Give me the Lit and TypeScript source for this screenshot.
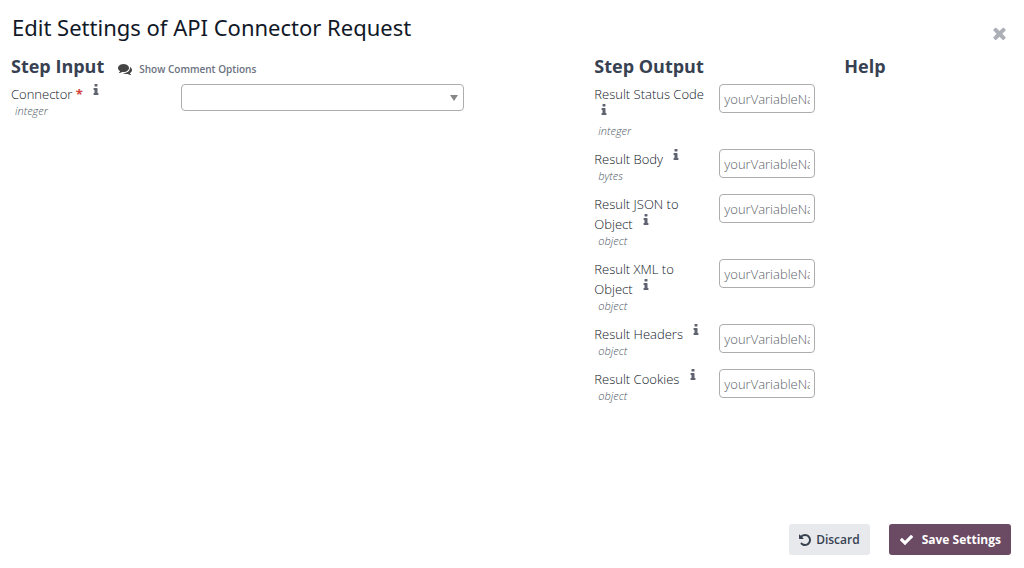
import { LitElement, html, css, svg } from "lit";
import { customElement, property } from "lit/decorators.js";

const ICONS = {
  info: {
    box: "576 128 640 1408",
    path: "M1216 1344v128q0 26-19 45t-45 19h-512q-26 0-45-19t-19-45v-128q0-26 19-45t45-19h64v-384h-64q-26 0-45-19t-19-45v-128q0-26 19-45t45-19h384q26 0 45 19t19 45v576h64q26 0 45 19t19 45zm-128-1152v192q0 26-19 45t-45 19h-256q-26 0-45-19t-19-45v-192q0-26 19-45t45-19h256q26 0 45 19t19 45z",
  },
  comments: {
    box: "0 0 1792 1792",
    path: "M1408 768q0 139-94 257t-256.5 186.5-353.5 68.5q-86 0-176-16-124 88-278 128-36 9-86 16h-3q-11 0-20.5-8t-11.5-21q-1-3-1-6.5t.5-6.5 2-6l2.5-5t3.5-5.5 4-5 4.5-5 4-4.5q5-6 23-25t26-29.5 22.5-29 25-38.5 20.5-44q-124-72-195-177t-71-224q0-139 94-257t256.5-186.5 353.5-68.5 353.5 68.5 256.5 186.5 94 257zm384 256q0 120-71 224.5t-195 176.5q10 24 20.5 44t25 38.5 22.5 29 26 29.5 23 25q1 1 4 4.5t4.5 5 4 5 3.5 5.5l2.5 5t2 6 .5 6.5-1 6.5q-3 14-13 22t-22 7q-50-7-86-16-154-40-278-128-90 16-176 16-271 0-472-132 58 4 88 4 161 0 309-45t264-129q125-92 192-212t67-254q0-77-23-152 129 71 204 178t75 230z",
  },
  close: {
    box: "302 302 1188 1252",
    path: "M1490 1322q0 40-28 68l-136 136q-28 28-68 28t-68-28l-294-294-294 294q-28 28-68 28t-68-28l-136-136q-28-28-28-68t28-68l294-294-294-294q-28-28-28-68t28-68l136-136q28-28 68-28t68 28l294 294 294-294q28-28 68-28t68 28l136 136q28 28 28 68t-28 68l-294 294 294 294q28 28 28 68z",
  },
  undo: {
    box: "128 128 1536 1536",
    path: "M1664 896q0 156-61 298t-164 245-245 164-298 61q-172 0-327-72.5t-264-204.5q-7-10-6.5-22.5t8.5-20.5l137-138q10-9 25-9 16 2 23 12 73 95 179 147t225 52q104 0 198.5-40.5t163.5-109.5 109.5-163.5 40.5-198.5-40.5-198.5-109.5-163.5-163.5-109.5-198.5-40.5q-98 0-188 35.5t-160 101.5l137 138q31 30 14 69-17 40-59 40h-448q-26 0-45-19t-19-45v-448q0-42 40-59 39-17 69 14l130 129q107-101 244.5-156.5t284.5-55.5q156 0 298 61t245 164 164 245 61 298z",
  },
  check: {
    box: "121 340 1550 1188",
    path: "M1671 566q0 40-28 68l-724 724-136 136q-28 28-68 28t-68-28l-136-136-362-362q-28-28-28-68t28-68l136-136q28-28 68-28t68 28l294 295 656-657q28-28 68-28t68 28l136 136q28 28 28 68z",
  },
  caret: { box: "0 0 8 6", path: "M0 0h8l-4 6z" },
};

const icon = (name: keyof typeof ICONS) => html`<svg
  class="icon ${name}"
  viewBox=${ICONS[name].box}
  aria-hidden="true"
>${svg`<path d=${ICONS[name].path} fill="currentColor"></path>`}</svg>`;

const OUTPUTS = [
  { id: "status", label: "Result Status Code", type: "integer" },
  { id: "body", label: "Result Body", type: "bytes" },
  { id: "json", label: "Result JSON to Object", type: "object" },
  { id: "xml", label: "Result XML to Object", type: "object" },
  { id: "headers", label: "Result Headers", type: "object" },
  { id: "cookies", label: "Result Cookies", type: "object" },
];

@customElement("field-caption")
class FieldCaption extends LitElement {
  @property() type = "";

  static styles = css`
    :host {
      display: block;
      line-height: 20px;
      color: #111827;
    }
    .info {
      width: 6px;
      height: 11px;
      margin-left: 7px;
      vertical-align: 4px;
      color: #5f636f;
    }
    .type {
      display: block;
      padding-left: 4px;
      font-size: 11px;
      font-style: italic;
      line-height: 14px;
      color: #4b5563;
    }
  `;

  render() {
    return html`<slot></slot> ${icon("info")}<span class="type">${this.type}</span>`;
  }
}

@customElement("app-root")
class AppRoot extends LitElement {
  static styles = css`
    :host {
      display: flex;
      flex-direction: column;
      box-sizing: border-box;
      min-height: 100vh;
      padding: 11px 13px 13px 11px;
      background: #fff;
      color: #374151;
      font-family: "Open Sans", "Noto Sans", sans-serif;
      font-size: 13px;
      font-weight: 300;
    }
    .header {
      display: flex;
      justify-content: space-between;
      align-items: center;
    }
    h1,
    h2 {
      margin: 0;
    }
    h1 {
      padding-left: 1px;
      font-family: "Noto Sans", "Open Sans", sans-serif;
      font-size: 22px;
      font-weight: 400;
      line-height: 32px;
      color: #111827;
    }
    h2 {
      font-size: 18px;
      font-weight: 700;
      line-height: 28px;
    }
    button {
      border: 0;
      color: inherit;
      font: inherit;
      cursor: pointer;
    }
    .dismiss {
      display: flex;
      padding: 12px 5px 0;
      background: none;
      color: #adafb7;
    }
    .close {
      width: 13px;
      height: 13px;
    }
    .columns {
      display: grid;
      grid-template-columns: 7fr 3fr 2fr;
      flex: 1;
      padding-top: 9px;
    }
    .heading {
      display: flex;
      align-items: center;
      gap: 14px;
      margin-bottom: 4px;
    }
    .toggle {
      display: flex;
      align-items: center;
      gap: 7px;
      padding: 6px 0 0;
      background: none;
      color: #6b7280;
      font-size: 10px;
      font-weight: 600;
      line-height: 16px;
    }
    .comments {
      width: 14px;
      height: 14px;
      color: #444;
    }
    .field {
      display: grid;
      align-items: start;
      margin-bottom: 11px;
    }
    .input-field {
      grid-template-columns: 170fr 283fr 130fr;
    }
    .output-field {
      grid-template-columns: 1fr 1fr;
    }
    .output-field label {
      padding-right: 10px;
    }
    .required {
      color: #d23f3a;
      font-weight: 700;
    }
    .picker {
      display: grid;
      align-items: center;
    }
    .picker > * {
      grid-area: 1 / 1;
    }
    select,
    input {
      box-sizing: border-box;
      width: 100%;
      min-width: 0;
      border: 1px solid #adadad;
      border-radius: 4px;
      background: #fff;
      color: inherit;
      font: inherit;
    }
    select {
      appearance: none;
      height: 27px;
      padding: 0 24px 0 8px;
    }
    .caret {
      justify-self: end;
      width: 8px;
      height: 6px;
      margin-right: 6px;
      color: #888;
      pointer-events: none;
    }
    .entry {
      padding-right: 29px;
    }
    input {
      display: block;
      height: 29px;
      padding: 0 4px;
    }
    input::placeholder {
      color: #5c5f69;
      opacity: 1;
    }
    .footer {
      display: flex;
      justify-content: flex-end;
      gap: 19px;
    }
    .action {
      display: flex;
      align-items: center;
      gap: 5px;
      padding: 0 10px;
      border-radius: 3px;
      background: #e7e9ed;
      font-size: 12px;
      font-weight: 600;
      line-height: 31px;
    }
    .primary {
      gap: 9px;
      padding-left: 11px;
      background: #6b4a63;
      color: #fff;
      font-weight: 700;
    }
    .undo {
      width: 12px;
      height: 12px;
    }
    .check {
      width: 13px;
      height: 10px;
    }
  `;

  render() {
    return html`
      <header class="header">
        <h1>Edit Settings of API Connector Request</h1>
        <button class="dismiss" aria-label="Close">${icon("close")}</button>
      </header>
      <main class="columns">
        <section>
          <div class="heading">
            <h2>Step Input</h2>
            <button class="toggle">${icon("comments")}Show Comment Options</button>
          </div>
          <div class="field input-field">
            <label for="connector">
              <field-caption type="integer">Connector <span class="required">*</span></field-caption>
            </label>
            <div class="picker">
              <select id="connector"><option></option></select>
              ${icon("caret")}
            </div>
          </div>
        </section>
        <section>
          <div class="heading"><h2>Step Output</h2></div>
          ${OUTPUTS.map(
            (o) => html`<div class="field output-field">
              <label for=${o.id}><field-caption type=${o.type}>${o.label}</field-caption></label>
              <div class="entry"><input id=${o.id} type="text" placeholder="yourVariableName" /></div>
            </div>`
          )}
        </section>
        <section>
          <div class="heading"><h2>Help</h2></div>
        </section>
      </main>
      <footer class="footer">
        <button class="action">${icon("undo")}Discard</button>
        <button class="action primary">${icon("check")}Save Settings</button>
      </footer>
    `;
  }
}
